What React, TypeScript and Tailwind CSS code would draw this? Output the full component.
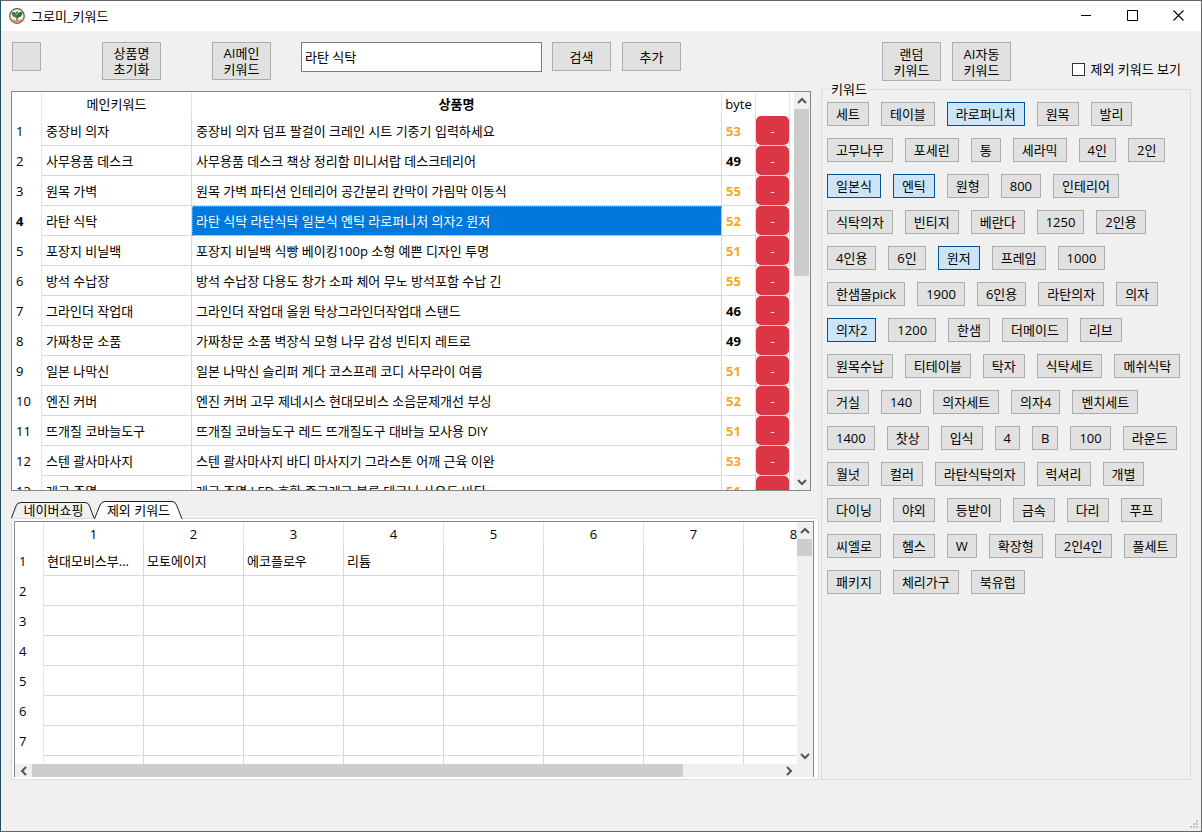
import { useState } from 'react'
import clsx from 'clsx'

interface Product {
  keyword: string
  title: string
  bytes: number
}

const PRODUCTS: Product[] = [
  { keyword: '중장비 의자', title: '중장비 의자 덤프 팔걸이 크레인 시트 기중기 입력하세요', bytes: 53 },
  { keyword: '사무용품 데스크', title: '사무용품 데스크 책상 정리함 미니서랍 데스크테리어', bytes: 49 },
  { keyword: '원목 가벽', title: '원목 가벽 파티션 인테리어 공간분리 칸막이 가림막 이동식', bytes: 55 },
  { keyword: '라탄 식탁', title: '라탄 식탁 라탄식탁 일본식 엔틱 라로퍼니처 의자2 윈저', bytes: 52 },
  { keyword: '포장지 비닐백', title: '포장지 비닐백 식빵 베이킹100p 소형 예쁜 디자인 투명', bytes: 51 },
  { keyword: '방석 수납장', title: '방석 수납장 다용도 창가 소파 체어 무노 방석포함 수납 긴', bytes: 55 },
  { keyword: '그라인더 작업대', title: '그라인더 작업대 올윈 탁상그라인더작업대 스탠드', bytes: 46 },
  { keyword: '가짜창문 소품', title: '가짜창문 소품 벽장식 모형 나무 감성 빈티지 레트로', bytes: 49 },
  { keyword: '일본 나막신', title: '일본 나막신 슬리퍼 게다 코스프레 코디 사무라이 여름', bytes: 51 },
  { keyword: '엔진 커버', title: '엔진 커버 고무 제네시스 현대모비스 소음문제개선 부싱', bytes: 52 },
  { keyword: '뜨개질 코바늘도구', title: '뜨개질 코바늘도구 레드 뜨개질도구 대바늘 모사용 DIY', bytes: 51 },
  { keyword: '스텐 괄사마사지', title: '스텐 괄사마사지 바디 마사지기 그라스톤 어깨 근육 이완', bytes: 53 },
  { keyword: '레고 조명', title: '레고 조명 LED 호환 중고레고 블록 테크닉 사운드 바디', bytes: 51 },
]

const KEYWORDS = [
  '세트', '테이블', '라로퍼니처', '원목', '발리',
  '고무나무', '포세린', '통', '세라믹', '4인', '2인',
  '일본식', '엔틱', '원형', '800', '인테리어',
  '식탁의자', '빈티지', '베란다', '1250', '2인용',
  '4인용', '6인', '윈저', '프레임', '1000',
  '한샘몰pick', '1900', '6인용', '라탄의자', '의자',
  '의자2', '1200', '한샘', '더메이드', '리브',
  '원목수납', '티테이블', '탁자', '식탁세트', '메쉬식탁',
  '거실', '140', '의자세트', '의자4', '벤치세트',
  '1400', '찻상', '입식', '4', 'B', '100', '라운드',
  '월넛', '컬러', '라탄식탁의자', '럭셔리', '개별',
  '다이닝', '야외', '등받이', '금속', '다리', '푸프',
  '씨엘로', '헴스', 'W', '확장형', '2인4인', '풀세트',
  '패키지', '체리가구', '북유럽',
]

const EXCLUDED = ['현대모비스부...', '모토에이지', '에코플로우', '리튬']
const COLS = [1, 2, 3, 4, 5, 6, 7, 8]
const ROWS = [1, 2, 3, 4, 5, 6, 7, 8]

// 50byte 초과 시 경고색
const MAX_BYTES = 50

const btn = 'border border-[#adadad] bg-[#e1e1e1] leading-4'

function AppIcon() {
  return (
    <svg className="size-4" viewBox="0 0 16 16">
      <circle cx="8" cy="8" r="7.3" fill="#f3ede2" stroke="#6b5544" strokeWidth="1.2" />
      <path d="M1.800 10.500L5 12h6l3.200-1.500A7 7 0 0 1 8 14.700a7 7 0 0 1-6.200-4.200z" fill="#d9905f" />
      <path d="M8 9.500C4.500 9.800 2.800 7.500 2.500 4 5.800 3.500 7.800 5 8 9.500z" fill="#3f7f55" />
      <path d="M8 9.500c3.500.3 5.200-2 5.500-5.500C10.200 3.500 8.200 5 8 9.500z" fill="#2f6a48" />
      <path d="M6.300 4.800L8 3l1.700 1.800L8 7z" fill="#4d9166" />
      <path d="M8 7v5" stroke="#2d5c40" strokeWidth="1.3" />
    </svg>
  )
}

function Chevron({ dir }: { dir: 'up' | 'down' | 'left' | 'right' }) {
  const d = {
    up: 'M1 7l4-4 4 4',
    down: 'M1 3l4 4 4-4',
    left: 'M7 1L3 5l4 4',
    right: 'M3 1l4 4-4 4',
  }[dir]
  return (
    <svg className="size-[10px]" viewBox="0 0 10 10" fill="none" stroke="#555" strokeWidth="2">
      <path d={d} />
    </svg>
  )
}

function VScrollbar({ thumb }: { thumb: string }) {
  return (
    <div className="flex w-4 shrink-0 flex-col bg-[#f0f0f0]">
      <button aria-label="위로" className="flex h-[17px] shrink-0 items-center justify-center">
        <Chevron dir="up" />
      </button>
      <div className="min-h-0 flex-1">
        <div className={clsx('mr-px bg-[#cdcdcd]', thumb)} />
      </div>
      <button aria-label="아래로" className="flex h-[17px] shrink-0 items-center justify-center">
        <Chevron dir="down" />
      </button>
    </div>
  )
}

function TitleBar() {
  return (
    <header className="flex h-[30px] shrink-0 items-center bg-white pb-px pl-2">
      <AppIcon />
      <h1 className="ml-[6px] flex-1">그로미_키워드</h1>
      <button aria-label="최소화" className="flex h-full w-[46px] items-center justify-center">
        <svg className="size-[11px]" viewBox="0 0 11 11" stroke="#000">
          <path d="M0 5.5h10" />
        </svg>
      </button>
      <button aria-label="최대화" className="flex h-full w-[46px] items-center justify-center">
        <svg className="size-[11px]" viewBox="0 0 11 11" fill="none" stroke="#000">
          <path d="M.5.5h10v10H.5z" />
        </svg>
      </button>
      <button aria-label="닫기" className="flex h-full w-[46px] items-center justify-center">
        <svg className="size-[11px]" viewBox="0 0 11 11" stroke="#000" strokeWidth="1.1">
          <path d="M.5.5l10 10M10.5.5l-10 10" />
        </svg>
      </button>
    </header>
  )
}

function ProductTable() {
  const [selected, setSelected] = useState(3)
  const headCell = 'h-6 border-r border-[#e5e5e5] p-0 font-normal'
  const cell = 'border-r border-b border-[#d8d8d8] p-0'

  return (
    <div className="mr-2 flex min-h-0 flex-1 border border-[#828790] bg-white">
      <div className="min-w-0 flex-1 overflow-hidden pr-1">
        <table className="w-full table-fixed border-separate border-spacing-0">
          <colgroup>
            <col className="w-[30px]" />
            <col className="w-[150px]" />
            <col />
            <col className="w-[34px]" />
            <col className="w-[34px]" />
          </colgroup>
          <thead>
            <tr>
              <th className={headCell} />
              <th className={headCell}>메인키워드</th>
              <th className="h-6 border-r border-[#e5e5e5] p-0 font-bold">상품명</th>
              <th className={headCell}>byte</th>
              <th className={headCell} />
            </tr>
          </thead>
          <tbody>
            {PRODUCTS.map((p, i) => (
              <tr key={p.keyword} className="h-[30px]" onClick={() => setSelected(i)}>
                <th
                  className={clsx(
                    'border-r border-[#e5e5e5] p-0 pl-1 text-left',
                    i === selected ? 'font-bold' : 'font-normal'
                  )}
                >
                  {i + 1}
                </th>
                <td className={clsx(cell, 'pl-1')}>{p.keyword}</td>
                <td
                  className={clsx(
                    cell,
                    'truncate pl-1',
                    i === selected &&
                      'bg-[#0078dc] text-white outline-1 -outline-offset-1 outline-dotted outline-[#d9a066]'
                  )}
                >
                  {p.title}
                </td>
                <td
                  className={clsx(cell, 'pl-1 font-bold', p.bytes > MAX_BYTES && 'text-[#f5a623]')}
                >
                  {p.bytes}
                </td>
                <td className={cell}>
                  <button
                    aria-label={`${p.keyword} 삭제`}
                    className="block h-[29px] w-full rounded-[5px] bg-[#dc3545] text-white"
                  >
                    -
                  </button>
                </td>
              </tr>
            ))}
          </tbody>
        </table>
      </div>
      <VScrollbar thumb="h-[46%]" />
    </div>
  )
}

function Tabs() {
  return (
    <div role="tablist" className="flex h-[17px] shrink-0 items-end">
      <button role="tab" aria-selected="false" className="relative h-4 w-[83px] pl-[2px] leading-4">
        <svg className="absolute inset-0" width="84" height="16" viewBox="0 0 84 16" fill="#f0f0f0" stroke="#222">
          <path d="M.5 16L5 4Q6 .5 10 .5H74Q77.500.5 78.500 4L83 16" />
        </svg>
        <span className="relative">네이버쇼핑</span>
      </button>
      <button role="tab" aria-selected="true" className="relative h-[17px] w-[89px] leading-4">
        <svg className="absolute inset-0" width="89" height="18" viewBox="0 0 89 18" fill="#fff" stroke="#222">
          <path d="M.5 18L6 4Q7.500.5 11 .5H78Q81.500.5 82.500 4L88 18" />
        </svg>
        <span className="relative">제외 키워드</span>
      </button>
    </div>
  )
}

function ExcludedTable() {
  return (
    <div className="flex h-[262px] shrink-0 border border-[#dcdcdc] bg-white p-[2px] pr-1">
      <div className="flex min-w-0 flex-1 border border-b-0 border-[#828790]">
        <div className="flex min-w-0 flex-1 flex-col">
          <div className="min-h-0 flex-1 overflow-hidden">
            <table className="w-[829px] table-fixed border-separate border-spacing-0">
              <thead>
                <tr>
                  <th className="h-6 w-[29px] border-r border-[#e5e5e5] p-0" />
                  {COLS.map((c) => (
                    <th key={c} className="h-6 border-r border-[#e5e5e5] p-0 font-normal">
                      {c}
                    </th>
                  ))}
                </tr>
              </thead>
              <tbody>
                {ROWS.map((r) => (
                  <tr key={r} className="h-[30px]">
                    <th className="border-r border-[#e5e5e5] p-0 pl-1 text-left font-normal">{r}</th>
                    {COLS.map((c) => (
                      <td key={c} className="truncate border-r border-b border-[#d8d8d8] p-0 px-[3px]">
                        {r === 1 && EXCLUDED[c - 1]}
                      </td>
                    ))}
                  </tr>
                ))}
              </tbody>
            </table>
          </div>
          <div className="flex h-[13px] shrink-0 bg-[#f0f0f0]">
            <button aria-label="왼쪽" className="flex w-[17px] items-center justify-center">
              <Chevron dir="left" />
            </button>
            <div className="flex flex-1">
              <div className="w-[87%] bg-[#cdcdcd]" />
            </div>
            <button aria-label="오른쪽" className="flex w-[17px] items-center justify-center">
              <Chevron dir="right" />
            </button>
          </div>
        </div>
        <div className="flex bg-[#f0f0f0] pb-[13px]">
          <VScrollbar thumb="h-[8%]" />
        </div>
      </div>
    </div>
  )
}

function KeywordPanel() {
  const [picked, setPicked] = useState(['라로퍼니처', '일본식', '엔틱', '윈저', '의자2'])

  function toggle(k: string) {
    setPicked((prev) => (prev.includes(k) ? prev.filter((p) => p !== k) : [...prev, k]))
  }

  return (
    <fieldset className="min-h-0 flex-1 border border-[#dcdcdc] px-[5px]">
      <legend className="ml-[2px] px-[2px] leading-4">키워드</legend>
      <div className="flex flex-wrap gap-3 pt-[5px]">
        {KEYWORDS.map((k) => (
          <button
            key={k}
            aria-pressed={picked.includes(k)}
            onClick={() => toggle(k)}
            className={clsx(
              'h-6 border px-2 leading-4',
              picked.includes(k) ? 'border-[#005499] bg-[#cce4f7]' : 'border-[#adadad] bg-[#e1e1e1]'
            )}
          >
            {k}
          </button>
        ))}
      </div>
    </fieldset>
  )
}

export default function App() {
  const [query, setQuery] = useState('라탄 식탁')

  return (
    <div className="flex h-screen flex-col overflow-hidden border border-[#666] border-l-[#1f5068] bg-[#f0f0f0] font-['Open_Sans','Noto_Sans_CJK_KR',sans-serif] text-[13px] leading-4 text-black">
      <TitleBar />
      <main className="flex min-h-0 flex-1 gap-[2px] px-[10px]">
        <div className="flex min-w-0 flex-1 flex-col">
          <div className="flex h-[60px] shrink-0 items-start pt-[11px] pl-px">
            <button aria-label="설정" className={clsx(btn, 'size-[29px]')} />
            <button className={clsx(btn, 'ml-[61px] h-[38px] w-[59px]')}>
              상품명
              <br />
              초기화
            </button>
            <button className={clsx(btn, 'ml-[51px] h-[38px] w-[59px]')}>
              AI메인
              <br />
              키워드
            </button>
            <input
              aria-label="검색어"
              className="ml-[30px] h-[30px] w-[241px] border border-[#7a7a7a] bg-white px-[3px] pb-[2px] outline-none"
              value={query}
              onChange={(e) => setQuery(e.target.value)}
            />
            <button className={clsx(btn, 'ml-[10px] h-[29px] w-[59px]')}>검색</button>
            <button className={clsx(btn, 'ml-[11px] h-[29px] w-[59px]')}>추가</button>
          </div>
          <ProductTable />
          <div className="h-[10px] shrink-0" />
          <Tabs />
          <ExcludedTable />
        </div>
        <div className="flex w-[370px] shrink-0 flex-col">
          <div className="flex h-[50px] shrink-0 items-start pt-[11px] pl-[61px]">
            <button className={clsx(btn, 'h-[39px] w-[59px]')}>
              랜덤
              <br />
              키워드
            </button>
            <button className={clsx(btn, 'ml-[11px] h-[39px] w-[59px]')}>
              AI자동
              <br />
              키워드
            </button>
            <label className="mt-[19px] mr-[10px] ml-auto flex items-center gap-[6px]">
              <input
                type="checkbox"
                className="size-[13px] appearance-none border border-[#333] bg-white checked:bg-[#0078dc]"
              />
              제외 키워드 보기
            </label>
          </div>
          <KeywordPanel />
        </div>
      </main>
      <footer className="flex h-[51px] shrink-0 items-end justify-end pr-[2px] pb-[2px]">
        <svg className="size-[9px]" viewBox="0 0 9 9" fill="#bfbfbf">
          <path d="M6 0h2v2H6zM3 3h2v2H3zM6 3h2v2H6zM0 6h2v2H0zM3 6h2v2H3zM6 6h2v2H6z" />
        </svg>
      </footer>
    </div>
  )
}
